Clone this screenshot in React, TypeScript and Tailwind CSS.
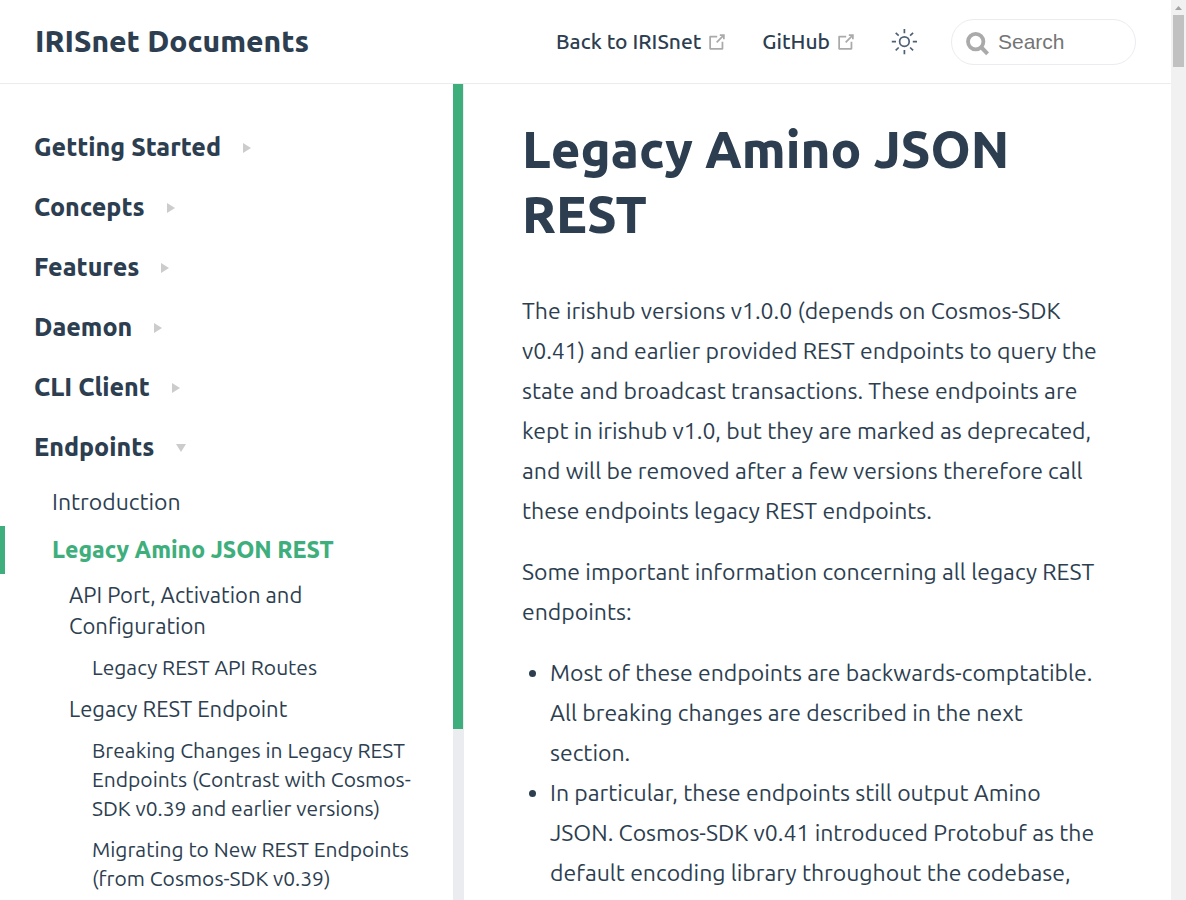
import { useState } from "react";

type Heading = { title: string; level: 2 | 3 };

const groups = ["Getting Started", "Concepts", "Features", "Daemon", "CLI Client"];

const pageHeadings: Heading[] = [
  { title: "API Port, Activation and Configuration", level: 2 },
  { title: "Legacy REST API Routes", level: 3 },
  { title: "Legacy REST Endpoint", level: 2 },
  { title: "Breaking Changes in Legacy REST Endpoints (Contrast with Cosmos-SDK v0.39 and earlier versions)", level: 3 },
  { title: "Migrating to New REST Endpoints (from Cosmos-SDK v0.39)", level: 3 },
];

function OutboundIcon() {
  return (
    <svg className="size-[22px] fill-[#aaa]" viewBox="0 0 100 100" aria-hidden="true">
      <path d="M18.8,85.1h56l0,0c2.2,0,4-1.8,4-4v-32h-8v28h-48v-48h28v-8h-32l0,0c-2.2,0-4,1.8-4,4v56C14.8,83.3,16.6,85.1,18.8,85.1z" />
      <polygon points="45.7,48.7 51.3,54.3 77.2,28.5 77.2,37.2 85.2,37.2 85.2,14.9 62.8,14.9 62.8,22.9 71.5,22.9" />
    </svg>
  );
}

function SunIcon() {
  return (
    <svg className="size-[26px]" viewBox="0 0 26 26" fill="none" stroke="#4e6074" strokeWidth="1.7" aria-hidden="true">
      <circle cx="13.4" cy="12.6" r="4.8" />
      <path d="M13.4 0v4.2M13.4 21v4.2M0.8 12.6h4.2M21.8 12.6h4.2M4.7 3.9l3 2.8M19.1 18.5l3 2.8M4.7 21.3l3-2.8M19.1 6.7l3-2.8" />
    </svg>
  );
}

function SearchIcon() {
  return (
    <svg className="h-7 w-6 shrink-0" viewBox="0 0 24 28" fill="none" stroke="#aaa" aria-hidden="true">
      <circle cx="9.7" cy="13.6" r="7.7" strokeWidth="3.8" />
      <path d="M15 19l6.6 6.8" strokeWidth="4" />
    </svg>
  );
}

function Arrow({ open = false }: { open?: boolean }) {
  return open ? (
    <svg className="h-2 w-[10px] fill-[#ccc]" viewBox="0 0 10 8" aria-hidden="true">
      <path d="M0 0h10L5 8z" />
    </svg>
  ) : (
    <svg className="h-[10px] w-2 fill-[#ccc]" viewBox="0 0 8 10" aria-hidden="true">
      <path d="M0 0v10l8-5z" />
    </svg>
  );
}

function NavLink({ href, children }: { href: string; children: string }) {
  return (
    <a href={href} className="flex items-center gap-[5px] whitespace-nowrap text-[21px] font-medium">
      {children}
      <OutboundIcon />
    </a>
  );
}

function GroupButton({ title, open, onClick }: { title: string; open?: boolean; onClick?: () => void }) {
  return (
    <button
      type="button"
      aria-expanded={!!open}
      onClick={onClick}
      className="flex h-[60px] w-full items-center gap-[22px] px-[34px] text-left text-[25px] font-extrabold"
    >
      {title}
      <Arrow open={open} />
    </button>
  );
}

function Sidebar() {
  const [open, setOpen] = useState(true);
  return (
    <aside className="flex w-[464px] shrink-0 overflow-hidden border-r border-[#eaecef]">
      <nav className="min-w-0 flex-1 pt-[34px]" aria-label="Documentation">
        {groups.map((title) => (
          <GroupButton key={title} title={title} />
        ))}
        <GroupButton title="Endpoints" open={open} onClick={() => setOpen(!open)} />
        {open && (
          <ul>
            <li>
              <a href="#introduction" className="flex h-12 items-center pl-[52px] text-[23px]">
                Introduction
              </a>
            </li>
            <li>
              <a
                href="#legacy"
                aria-current="page"
                className="flex h-12 items-center border-l-[5px] border-[#3eaf7c] pl-[47px] text-[23px] font-extrabold text-[#3eaf7c]"
              >
                Legacy Amino JSON REST
              </a>
              <ul>
                {pageHeadings.map(({ title, level }) => (
                  <li key={title}>
                    <a
                      href="#section"
                      className={
                        level === 2
                          ? "block pt-[5px] pr-8 pb-[6px] pl-[69px] text-[22px] leading-[31px]"
                          : "block py-[6px] pr-8 pl-[92px] text-[21px] leading-[29px]"
                      }
                    >
                      {title}
                    </a>
                  </li>
                ))}
              </ul>
            </li>
          </ul>
        )}
      </nav>
      <div className="w-[10px] shrink-0 bg-[#eaecef]" aria-hidden="true">
        <div className="h-[79%] bg-[#3eaf7c]" />
      </div>
    </aside>
  );
}

function PageScrollbar() {
  return (
    <div className="flex w-[15px] shrink-0 flex-col items-center bg-[#f1f1f1]" aria-hidden="true">
      <svg className="h-[15px] w-[15px] fill-[#a3a3a3]" viewBox="0 0 15 15">
        <path d="M4 10h7L7.5 6z" />
      </svg>
      <div className="h-[52px] w-[11px] bg-[#c1c1c1]" />
    </div>
  );
}

export default function App() {
  return (
    <div className="flex h-screen overflow-hidden bg-white font-['Ubuntu','Noto_Sans',sans-serif] text-[#2c3e50]">
      <div className="flex min-w-0 flex-1 flex-col">
        <header className="flex h-[84px] shrink-0 items-center justify-between border-b border-[#eaecef] px-[35px]">
          <a href="#home" className="whitespace-nowrap text-[30px] font-extrabold">
            IRISnet Documents
          </a>
          <div className="flex items-center gap-[34px]">
            <NavLink href="#irisnet">Back to IRISnet</NavLink>
            <NavLink href="#github">GitHub</NavLink>
            <button type="button" aria-label="Toggle theme">
              <SunIcon />
            </button>
            <label className="flex h-[46px] w-[185px] items-center gap-2 rounded-full border border-[#eaecef] pl-[14px]">
              <SearchIcon />
              <input
                type="text"
                aria-label="Search"
                placeholder="Search"
                className="min-w-0 flex-1 rounded-full bg-transparent font-['Liberation_Sans',sans-serif] text-[21px] outline-none placeholder:text-[#757575]"
              />
            </label>
          </div>
        </header>
        <div className="flex min-h-0 flex-1">
          <Sidebar />
          <main className="min-w-0 flex-1 overflow-hidden pt-[33px] pr-[66px] pl-[58px] text-[23px] leading-[40px]">
            <h1 className="mb-11 text-[51px] leading-[65px] font-extrabold">Legacy Amino JSON REST</h1>
            <p className="mb-[21px]">
              The irishub versions v1.0.0 (depends on Cosmos-SDK v0.41) and earlier provided REST endpoints to query the
              state and broadcast transactions. These endpoints are kept in irishub v1.0, but they are marked as
              deprecated, and will be removed after a few versions therefore call these endpoints legacy REST endpoints.
            </p>
            <p className="mb-[21px]">Some important information concerning all legacy REST endpoints:</p>
            <ul className="list-disc pl-7">
              <li>
                Most of these endpoints are backwards-comptatible. All breaking changes are described in the next
                section.
              </li>
              <li>
                In particular, these endpoints still output Amino JSON. Cosmos-SDK v0.41 introduced Protobuf as the
                default encoding library throughout the codebase,
              </li>
            </ul>
          </main>
        </div>
      </div>
      <PageScrollbar />
    </div>
  );
}
